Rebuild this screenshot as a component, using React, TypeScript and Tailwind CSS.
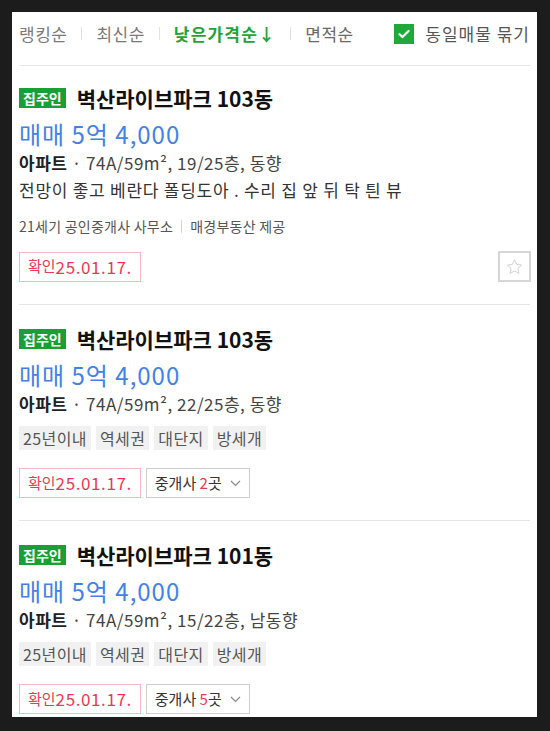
import React from 'react'

const font = { fontFamily: '"Noto Sans CJK KR", "Noto Sans", sans-serif' }

type Item = {
  title: string
  info: string
  desc?: string
  broker?: string
  tags?: string[]
  agents?: number
}

const items: Item[] = [
  {
    title: '벽산라이브파크 103동',
    info: '74A/59m², 19/25층, 동향',
    desc: '전망이 좋고 베란다 폴딩도아 . 수리 집 앞 뒤 탁 틘 뷰',
    broker: '21세기 공인중개사 사무소',
  },
  {
    title: '벽산라이브파크 103동',
    info: '74A/59m², 22/25층, 동향',
    tags: ['25년이내', '역세권', '대단지', '방세개'],
    agents: 2,
  },
  {
    title: '벽산라이브파크 101동',
    info: '74A/59m², 15/22층, 남동향',
    tags: ['25년이내', '역세권', '대단지', '방세개'],
    agents: 5,
  },
]

function Sep() {
  return <span className="mx-[14px] h-[13px] w-px bg-[#e2e2e2]" />
}

function Header() {
  return (
    <div className="flex h-[54px] items-center border-b border-[#e6e6e6] pb-[10px] text-[17px] leading-[20px] tracking-[0.5px]">
      <span className="text-[#7a7a7a]">랭킹순</span>
      <Sep />
      <span className="text-[#7a7a7a]">최신순</span>
      <Sep />
      <span className="font-bold tracking-[1.2px] text-[#1fa33a]">낮은가격순↓</span>
      <Sep />
      <span className="text-[#6a6a6a]">면적순</span>
      <div className="ml-auto flex items-center">
        <span className="flex h-[20px] w-[20px] items-center justify-center bg-[#1fa93b]">
          <svg width="12" height="10" viewBox="0 0 12 10" fill="none">
            <path d="M1.5 5.2 4.5 8 10.5 2" stroke="#fff" strokeWidth="2.2" strokeLinecap="round" strokeLinejoin="round" />
          </svg>
        </span>
        <span className="ml-[11px] tracking-[1px] text-[#555]">동일매물 묶기</span>
      </div>
    </div>
  )
}

function Card({ item, first }: { item: Item; first: boolean }) {
  return (
    <div className={`border-b border-[#e6e6e6] pb-[22px] ${first ? 'pt-[20px]' : 'pt-[22px]'}`}>
      <div className="flex h-[24px] items-center">
        <span className="flex h-[20px] items-center bg-[#1a9f37] px-[4px] text-[14px] font-bold leading-none text-white">집주인</span>
        <span className="ml-[11px] text-[21px] font-semibold leading-[24px] text-[#111]">{item.title}</span>
      </div>
      <div className="mt-[9px] text-[24px] leading-[30px] tracking-[1px] text-[#4282e6]">매매 5억 4,000</div>
      <div className="text-[17px] leading-[28px] tracking-[0.5px] text-[#444]">
        <span className="font-bold text-[#222]">아파트</span> · {item.info}
      </div>
      {item.desc && <div className="text-[17px] leading-[26px] tracking-[0.75px] text-[#333]">{item.desc}</div>}
      {item.broker && (
        <div className="mt-[13px] flex items-center text-[14px] leading-[20px] tracking-[0.25px] text-[#555]">
          {item.broker}
          <span className="mx-[8px] h-[13px] w-px bg-[#d5d5d5]" />
          매경부동산 제공
        </div>
      )}
      {item.tags && (
        <div className="mt-[8px] flex gap-[5px]">
          {item.tags.map(t => (
            <span key={t} className="flex h-[24px] items-center bg-[#f1f1f1] px-[4px] text-[16px] tracking-[0.4px] text-[#555]">{t}</span>
          ))}
        </div>
      )}
      <div className={`flex items-center ${item.tags ? 'mt-[18px]' : 'mt-[15px]'}`}>
        <span className="flex h-[30px] items-center border border-[#f6b7c1] px-[8px] text-[#e83a52]">
          <span className="text-[15px]">확인</span>
          <span className="text-[17px] tracking-[0.6px]">25.01.17.</span>
        </span>
        {item.agents && (
          <span className="ml-[5px] flex h-[30px] items-center border border-[#cfcfcf] px-[8px] text-[15px] text-[#333]">
            중개사&nbsp;<span className="text-[#e83a52]">{item.agents}</span>곳
            <svg className="ml-[8px]" width="11" height="7" viewBox="0 0 11 7" fill="none">
              <path d="M1 1l4.5 4.5L10 1" stroke="#888" strokeWidth="1.2" />
            </svg>
          </span>
        )}
        {!item.agents && (
          <span className="ml-auto mr-[-1px] flex h-[31px] w-[33px] items-center justify-center border-2 border-[#d6d6d6]">
            <svg width="19" height="18" viewBox="0 0 24 24" fill="none">
              <path d="M12 2.5l2.9 6.1 6.6.8-4.9 4.6 1.3 6.6L12 17.3l-5.9 3.3 1.3-6.6-4.9-4.6 6.6-.8z" stroke="#cdcdcd" strokeWidth="1.2" strokeLinejoin="round" />
            </svg>
          </span>
        )}
      </div>
    </div>
  )
}

export default function App() {
  return (
    <div className="h-[731px] w-[550px] overflow-hidden bg-[#1c1c1c] pl-[12px] pt-[12px]" style={font}>
      <div className="h-[705px] w-[525px] overflow-hidden bg-white pl-[7px] pr-[7px]">
        <Header />
        {items.map((it, i) => (
          <Card key={i} item={it} first={i === 0} />
        ))}
      </div>
    </div>
  )
}
